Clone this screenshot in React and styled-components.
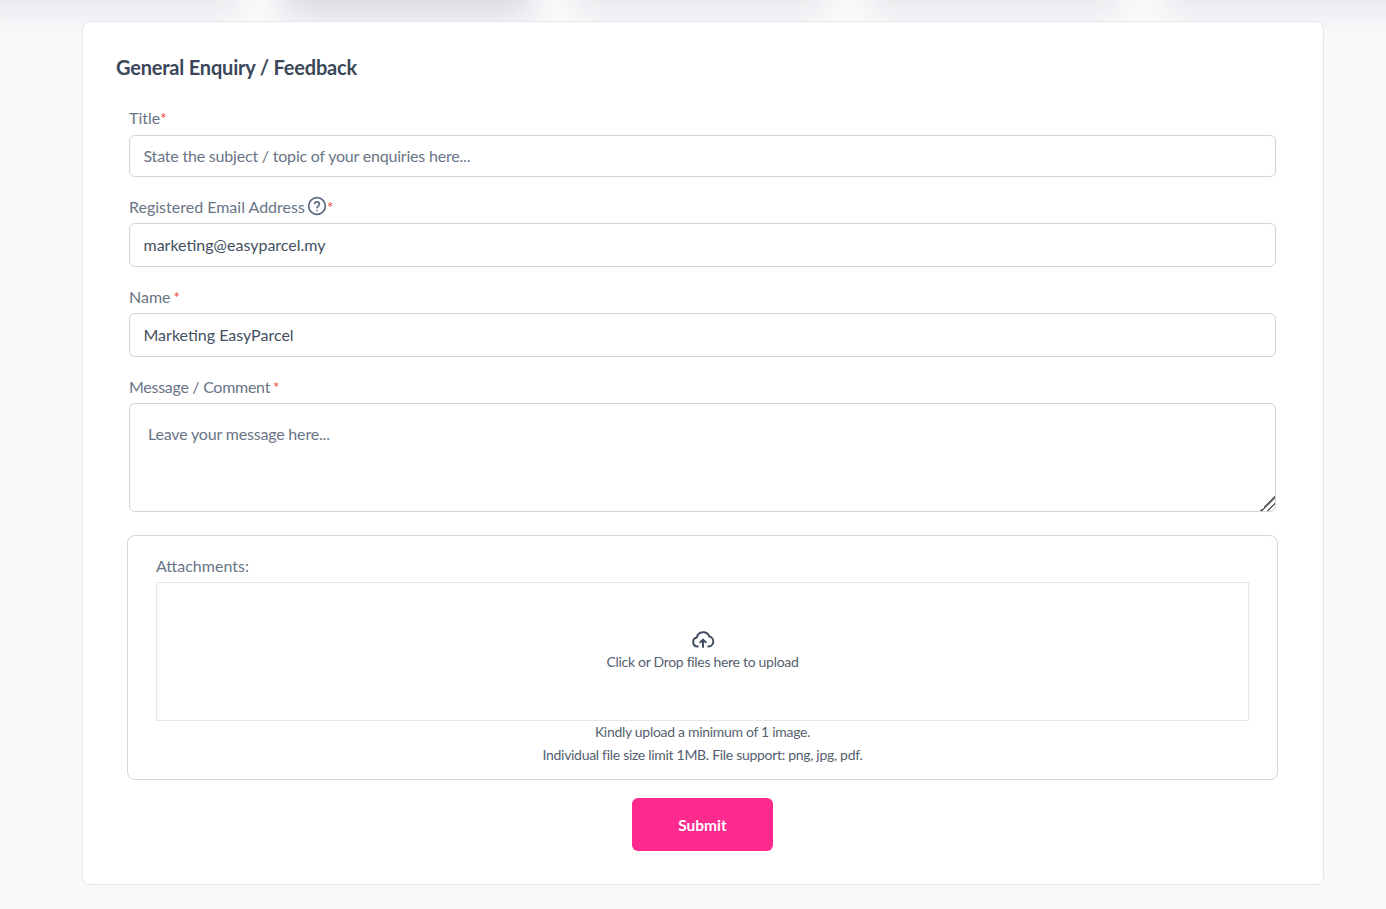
import React from "react";
import styled, { createGlobalStyle } from "styled-components";

const Global = createGlobalStyle`
  html, body { margin: 0; padding: 0; background: #f8f9fb; }
  body { font-family: "Lato", "Liberation Sans", sans-serif; color: #364152; }
  * { box-sizing: border-box; }
`;

const Page = styled.div`
  position: relative;
  height: 909px;
  overflow: hidden;
  padding: 21px 63px 0 82px;
`;

const ShadowRow = styled.div`
  position: absolute;
  top: -50px;
  left: 0;
  right: 0;
  height: 50px;
`;

const ShadowTab = styled.div`
  position: absolute;
  top: 0;
  left: ${(p) => p.$x}px;
  width: ${(p) => p.$w}px;
  height: 50px;
  background: #fff;
  box-shadow: 0 ${(p) => p.$y}px ${(p) => p.$blur}px rgba(16, 24, 40, ${(p) => p.$a});
`;

const Card = styled.main`
  position: relative;
  width: 1242px;
  height: 864px;
  background: #fff;
  border: 1px solid #e3e8ef;
  border-radius: 8px;
  padding: 32px 47px 0 33px;
`;

const Heading = styled.h2`
  margin: 0;
  font-size: 20px;
  line-height: 26px;
  font-weight: 700;
  letter-spacing: -0.2px;
  color: #3b4759;
`;

const Form = styled.form`
  display: flex;
  flex-direction: column;
  padding: 26px 0 0 13px;
`;

const Field = styled.div`
  display: flex;
  flex-direction: column;
  margin-bottom: ${(p) => p.$gap ?? 18}px;
`;

const Label = styled.label`
  display: flex;
  align-items: center;
  height: 24px;
  margin-bottom: ${(p) => p.$gap ?? 4}px;
  font-size: 16px;
  line-height: 20px;
  letter-spacing: ${(p) => p.$ls ?? 0}px;
  color: #697586;
  white-space: pre;
`;

const Req = styled.span`
  color: #f04438;
  margin-left: ${(p) => p.$gap ?? 0}px;
  font-size: 15px;
`;

const HelpIcon = styled.svg`
  width: 20px;
  height: 20px;
  margin: -3px 0 0 2px;
  color: #5a6a85;
`;

const TextInput = styled.input`
  display: block;
  width: 100%;
  height: ${(p) => p.$h}px;
  padding: 0 13.5px 2px;
  border: 1px solid #cdd5df;
  border-radius: 6px;
  background: #fff;
  font: 400 16px "Lato", sans-serif;
  color: #434f60;
  outline: none;
  &::placeholder { color: #697586; opacity: 1; letter-spacing: -0.2px; }
`;

const TextArea = styled.textarea`
  display: block;
  width: 100%;
  height: 109px;
  padding: 20px 18px;
  border: 1px solid #cdd5df;
  border-radius: 6px;
  background: #fff;
  font: 400 16px/20px "Lato", sans-serif;
  color: #434f60;
  outline: none;
  resize: vertical;
  &::placeholder { color: #697586; opacity: 1; letter-spacing: -0.18px; }
  &::-webkit-resizer {
    background:
      linear-gradient(135deg, transparent 50%, #666 50%, #666 57%, transparent 57%) 0 0 / 100% 100% no-repeat,
      linear-gradient(135deg, transparent 73%, #666 73%, #666 80%, transparent 80%) 0 0 / 100% 100% no-repeat;
  }
`;

const AttachBox = styled.section`
  width: 1151px;
  height: 245px;
  margin: 5px 0 0 -2px;
  padding: 18px 28px 0;
  border: 1px solid #d4d6da;
  border-radius: 8px;
`;

const AttachLabel = styled.div`
  font-size: 16px;
  line-height: 24px;
  height: 28px;
  color: #697586;
`;

const DropZone = styled.div`
  height: 139px;
  border: 1px solid #e3e8ef;
  display: flex;
  flex-direction: column;
  align-items: center;
  padding-top: 44px;
`;

const CloudIcon = styled.svg`
  width: 24px;
  height: 24px;
  margin-bottom: 1px;
  color: #434f60;
`;

const Hint = styled.div`
  font-size: 14px;
  line-height: 20px;
  letter-spacing: -0.3px;
  color: #556070;
  text-align: center;
`;

const Notes = styled.div`
  display: flex;
  flex-direction: column;
  gap: 3px;
  padding-top: 1px;
`;

const SubmitRow = styled.div`
  display: flex;
  justify-content: center;
  margin-top: 18px;
`;

const Submit = styled.button`
  width: 141px;
  height: 53px;
  border: none;
  border-radius: 6px;
  background: #ff2a8d;
  color: #fff;
  font: 700 15.5px "Lato", sans-serif;
`;

export default function App() {
  return (
    <>
      <Global />
      <Page>
        <ShadowRow aria-hidden="true">
          <ShadowTab $x={285} $w={245} $y={16} $blur={30} $a={0.13} />
          <ShadowTab $x={580} $w={240} $y={12} $blur={30} $a={0.08} />
          <ShadowTab $x={875} $w={240} $y={12} $blur={30} $a={0.08} />
          <ShadowTab $x={1170} $w={240} $y={12} $blur={30} $a={0.08} />
          <ShadowTab $x={-20} $w={255} $y={12} $blur={30} $a={0.08} />
        </ShadowRow>
        <Card>
          <Heading>General Enquiry / Feedback</Heading>
          <Form>
            <Field>
              <Label $gap={5}>Title<Req>*</Req></Label>
              <TextInput $h={42} placeholder="State the subject / topic of your enquiries here..." />
            </Field>
            <Field>
              <Label>
                Registered Email Address
                <HelpIcon viewBox="0 0 24 24" fill="none" stroke="currentColor" strokeWidth="2" strokeLinecap="round" strokeLinejoin="round">
                  <circle cx="12" cy="12" r="10" />
                  <path d="M9.1 9a3 3 0 0 1 5.8 1c0 2-3 2.6-3 4" />
                  <path d="M12 17.5h.01" />
                </HelpIcon>
                <Req>*</Req>
              </Label>
              <TextInput $h={44} readOnly value="marketing@easyparcel.my" />
            </Field>
            <Field>
              <Label>Name<Req $gap={3}>*</Req></Label>
              <TextInput $h={44} readOnly value="Marketing EasyParcel" />
            </Field>
            <Field>
              <Label $ls={-0.28}>Message / Comment<Req $gap={3}>*</Req></Label>
              <TextArea placeholder="Leave your message here..." />
            </Field>
            <AttachBox>
              <AttachLabel>Attachments:</AttachLabel>
              <DropZone>
                <CloudIcon viewBox="0 0 24 24" fill="none" stroke="currentColor" strokeWidth="2" strokeLinecap="round" strokeLinejoin="round">
                  <path d="M6.8 19.5H6.5a4.5 4.5 0 0 1-.7-8.9A6.5 6.5 0 0 1 18.3 9.6a5 5 0 0 1-.8 9.9h-.3" />
                  <path d="M12 20v-7" />
                  <path d="M9.3 15.3 12 12.6l2.7 2.7" />
                </CloudIcon>
                <Hint>Click or Drop files here to upload</Hint>
              </DropZone>
              <Notes>
                <Hint>Kindly upload a minimum of 1 image.</Hint>
                <Hint>Individual file size limit 1MB. File support: png, jpg, pdf.</Hint>
              </Notes>
            </AttachBox>
            <SubmitRow>
              <Submit type="button">Submit</Submit>
            </SubmitRow>
          </Form>
        </Card>
      </Page>
    </>
  );
}
